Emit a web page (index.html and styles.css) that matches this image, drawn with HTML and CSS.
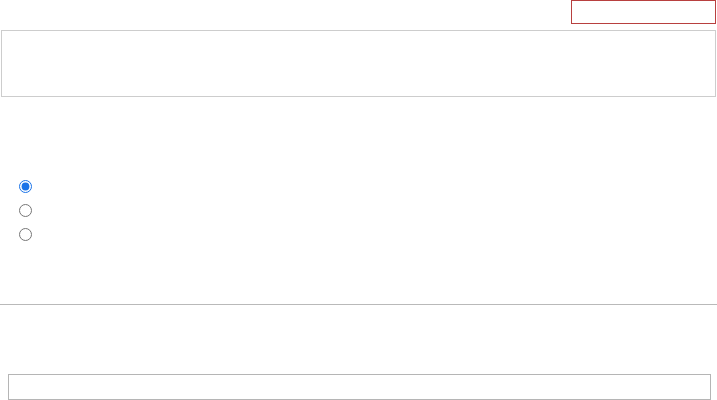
FILE: index.html
```html
<!DOCTYPE html>
<html>
<head>
<meta charset="utf-8">
<link rel="stylesheet" href="styles.css">
</head>
<body>
<div class="page">
  <div class="topbar"><div class="alert-box"></div></div>
  <div class="panel"></div>
  <div class="options">
    <label class="opt"><input type="radio" name="o" checked></label>
    <label class="opt"><input type="radio" name="o"></label>
    <label class="opt"><input type="radio" name="o"></label>
  </div>
  <div class="divider"></div>
  <div class="field"></div>
</div>
</body>
</html>
```
FILE: styles.css
```css
html, body { margin: 0; padding: 0; background: #fff; }
body { font-family: "Liberation Sans", Arial, sans-serif; font-size: 13px; }
.page { width: 717px; height: 400px; overflow: hidden; display: flex; flex-direction: column; }
.topbar { display: flex; justify-content: flex-end; padding-right: 1px; }
.alert-box { width: 143px; height: 22px; border: 1px solid #b8403f; }
.panel { margin: 6px 1px 0 1px; height: 67px; border: 1px solid #cdcdcd; }
.options { display: flex; flex-direction: column; gap: 11px; padding: 83px 0 0 19px; }
.opt { display: flex; align-items: center; height: 13px; }
.opt input { margin: 0; width: 13px; height: 13px; accent-color: #1a73e8; }
.divider { margin-top: 63px; height: 1px; background: #b9b9b9; }
.field { margin: 69px 0 0 8px; width: 701px; height: 25px; border: 1px solid #b5b5b5; }
```
